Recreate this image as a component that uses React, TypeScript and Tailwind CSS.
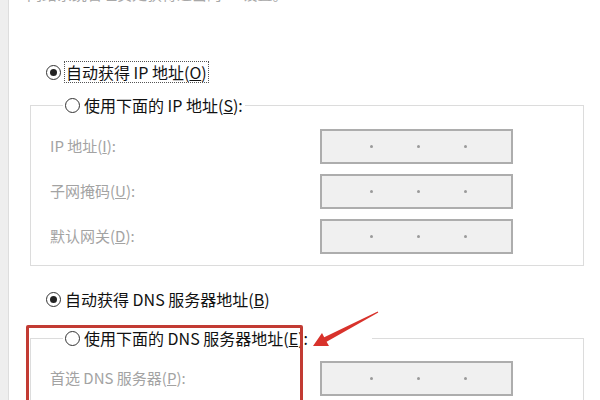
import React from "react";

const font = { fontFamily: '"Noto Sans CJK SC", "Noto Sans", sans-serif' };

function Radio({ checked }: { checked?: boolean }) {
  return (
    <span className="flex h-[15px] w-[15px] shrink-0 items-center justify-center rounded-full border-[1.5px] border-[#333333] bg-white">
      {checked && <span className="h-[7px] w-[7px] rounded-full bg-[#222222]" />}
    </span>
  );
}

function IpBox() {
  return (
    <div className="flex h-[35px] w-[193px] items-center gap-[44px] border-2 border-[#adadad] bg-[#f0f0f0] pl-[48px]">
      <span className="h-[3px] w-[3px] rounded-full bg-[#9a9a9a]" />
      <span className="h-[3px] w-[3px] rounded-full bg-[#9a9a9a]" />
      <span className="h-[3px] w-[3px] rounded-full bg-[#9a9a9a]" />
    </div>
  );
}

function FieldRow({ label, hot, rest }: { label: string; hot: string; rest: string }) {
  return (
    <div className="flex items-center">
      <span className="w-[270px] text-[15px] text-[#a3a3a3]">
        {label}(<span className="underline">{hot}</span>){rest}
      </span>
      <IpBox />
    </div>
  );
}

// group box whose caption (a radio) sits on the top border line
function Legend({ children, padRight }: { children: React.ReactNode; padRight: string }) {
  return (
    <div className={`-mt-[12px] ml-[13px] flex h-[22px] w-fit items-center gap-[4px] bg-white pl-[2px] ${padRight}`}>
      <Radio />
      <span className="text-[16px] leading-[20px] text-[#111111]">{children}</span>
    </div>
  );
}

export default function App() {
  return (
    <div className="relative flex h-[400px] w-[600px] overflow-hidden bg-white" style={font}>
      <div className="w-[9px] shrink-0 border-r border-[#dddddd] bg-[#eeeeee]" />

      <div className="flex flex-1 flex-col pl-[21px] pr-[16px]">
        {/* description text cut by the top edge */}
        <div className="-ml-[3px] -mt-[17px] h-[21px] whitespace-nowrap text-[15px] leading-[21px] text-[#a8a8a8]">
          网络系统管理员处获得适当的 IP 设置。
        </div>

        <div className="mt-[58px] flex h-[22px] items-center gap-[4px] pl-[16px]">
          <Radio checked />
          <span className="px-[1px] text-[16px] leading-[20px] text-[#111111] outline-1 outline-dotted outline-[#555555]">
            自动获得 IP 地址(<span className="underline">O</span>)
          </span>
        </div>

        <div className="mt-[23px] h-[161px] shrink-0 border border-[#dcdcdc] pl-[19px]">
          <Legend padRight="pr-[2px]">
            使用下面的 IP 地址(<span className="underline">S</span>):
          </Legend>
          <div className="mt-[13px] flex flex-col gap-[10px]">
            <FieldRow label="IP 地址" hot="I" rest=":" />
            <FieldRow label="子网掩码" hot="U" rest=":" />
            <FieldRow label="默认网关" hot="D" rest=":" />
          </div>
        </div>

        <div className="mt-[23px] flex h-[22px] items-center gap-[4px] pl-[16px]">
          <Radio checked />
          <span className="text-[16px] leading-[20px] text-[#111111]">
            自动获得 DNS 服务器地址(<span className="underline">B</span>)
          </span>
        </div>

        <div className="mt-[29px] h-[160px] shrink-0 border border-[#dcdcdc] pl-[19px]">
          <Legend padRight="pr-[64px]">
            使用下面的 DNS 服务器地址(<span className="underline">E</span>):
          </Legend>
          <div className="mt-[12px]">
            <FieldRow label="首选 DNS 服务器" hot="P" rest=":" />
          </div>
        </div>
      </div>

      {/* annotation: red frame and arrow */}
      <div className="absolute left-[26px] top-[325px] h-[100px] w-[277px] rounded-[2px] border-[3px] border-[#c23b33]" />
      <svg className="absolute left-0 top-0" width="600" height="400" viewBox="0 0 600 400">
        <polygon
          points="313,346 329,346 326.6,341.7 378.3,312.5 377.7,311.5 324.2,337.3 322,333"
          fill="#d8322b"
        />
      </svg>
    </div>
  );
}
